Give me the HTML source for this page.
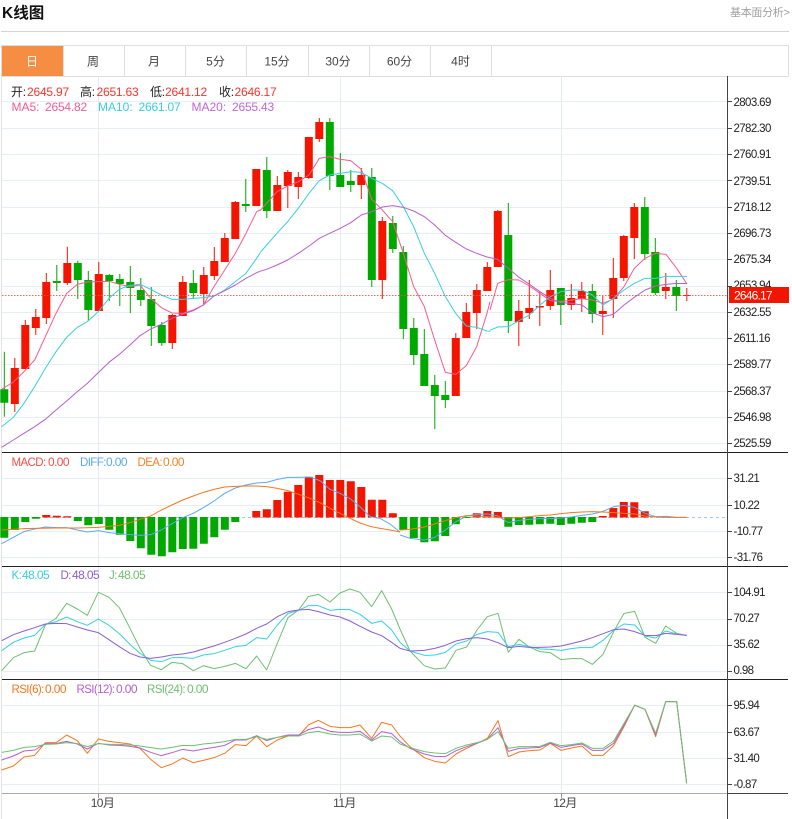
<!DOCTYPE html>
<html><head><meta charset="utf-8"><style>
html,body{margin:0;padding:0;background:#fff;width:792px;height:819px;overflow:hidden}
svg{display:block;font-family:"Liberation Sans","Noto Sans CJK SC",sans-serif}
text{font-size:12px}
polyline{fill:none;stroke-width:1;vector-effect:non-scaling-stroke;stroke-linejoin:round}
.a text{font-size:11.5px;fill:#222;letter-spacing:-.62px}
.t text{font-size:12px;fill:#444;text-anchor:middle}
.x text{font-size:12px;fill:#444;text-anchor:middle;letter-spacing:-.6px}
.l text{font-size:12px;letter-spacing:-.2px}
.l text.m{letter-spacing:0}
.l text.n{font-size:11.5px;letter-spacing:-.6px}
.l text.s{letter-spacing:-.6px}
</style></head><body>
<svg width="792" height="819" viewBox="0 0 792 819" xmlns="http://www.w3.org/2000/svg">
<text x="2" y="18" style="font-size:15.5px;font-weight:700" fill="#111">K线图</text>
<text x="730" y="16" style="font-size:11px;letter-spacing:-.3px" fill="#a0a0a0">基本面分析&gt;</text>
<path d="M1 31.5H789" stroke="#d4d4d4"/>
<!-- tabs -->
<path d="M1 45.5H788.5V76.5H1.5V45.5" fill="none" stroke="#dedede"/>
<path d="M63.5 46V76M124.5 46V76M185.5 46V76M246.5 46V76M308.5 46V76M369.5 46V76M430.5 46V76M491.5 46V76" stroke="#dedede"/>
<rect x="2" y="46" width="61" height="30" fill="#f58d42"/>
<g class="t">
<text x="32" y="65.500" style="fill:#fff">日</text><text x="93" y="65.500">周</text><text x="154" y="65.500">月</text><text x="215.5" y="65.500">5分</text><text x="277" y="65.500">15分</text><text x="338" y="65.500">30分</text><text x="399.5" y="65.500">60分</text><text x="460.5" y="65.500">4时</text>
</g>
<path d="M1.5 76V819" stroke="#e2e2e2"/>
<!-- grid -->
<path d="M2 101.5H727M2 128.5H727M2 154.5H727M2 180.5H727M2 207.5H727M2 233.5H727M2 259.5H727M2 286.5H727M2 312.5H727M2 338.5H727M2 364.5H727M2 391.5H727M2 417.5H727M2 443.5H727M2 478.5H727M2 505.5H727M2 531.5H727M2 557.5H727M2 592.5H727M2 619.5H727M2 645.5H727M2 671.5H727M2 705.5H727M2 732.5H727M2 758.5H727M2 784.5H727" stroke="#e8eff4"/>
<path d="M98.5 76V793M340.5 76V793M561.5 76V793" stroke="#e3ebf2"/>
<!-- candle wicks -->
<path fill="none" stroke="#f41500" stroke-width="1" d="M14.8 358V412M25.3 320V369M35.8 309V335M46.3 273V324M67.3 246.700V285M98.800 262V311M172.300 314V349M182.800 276V316M203.800 267V305M214.300 247V280M224.800 233V262M235.300 201V239M256.300 169V206M277.300 176V211M287.800 170V208M298.300 172V199M308.800 137V179M319.300 118V142M361.300 168V199M382.300 217V299M455.800 333V396M466.300 303V338M476.800 284V329M487.300 262V291M497.800 210V267M518.800 300V346M529.300 280V319M539.800 292V326M550.300 270V310M571.300 284V310M581.800 282V312M602.800 296V335M613.300 258V318M623.800 235V281M634.300 203V259M665.800 273V299M686.800 288V301"/>
<path fill="none" stroke="#00a800" stroke-width="1" d="M4.300 351.700V416.700M56.800 265V291M77.800 260.700V299M88.300 271V321M109.300 274V301M119.800 274V306M130.300 266V313M140.800 278V306M151.300 287V346M161.800 322V346M193.300 270V299M245.800 179V212M266.800 157V218M329.800 118V190M340.300 153V187M350.800 170V192M371.800 168V287M392.800 216V253M403.300 246V339M413.800 318V365M424.300 329V386M434.800 375V429M445.300 381V408M508.300 203V333M560.800 288V325M592.300 284V323M644.800 197V260M655.300 238V295M676.300 280V311"/>
<!-- candle bodies -->
<path fill="none" stroke="#f41500" stroke-width="8" d="M14.8 368V404M25.3 325V369M35.8 317V328M46.3 282V318M67.3 263V283M98.800 274V311M172.300 315V343M182.800 282V316M203.800 275V294M214.300 261V276M224.800 238V262M235.300 202V239M256.300 169V206M277.300 185V211M287.800 172V186M298.300 177V187M308.800 137V178M319.300 122V139M361.300 175V185M382.300 221V280M455.800 338V396M466.300 312V338M476.800 290V313M487.300 267V291M497.800 211V267M518.800 311V322M529.300 308V313M539.800 306V307.500M550.300 290V306M571.300 298V305M581.800 291V299M602.800 311V314M613.300 278V299M623.800 236V278M634.300 207V238M665.800 287V291M686.800 295V296"/>
<path fill="none" stroke="#00a800" stroke-width="8" d="M4.300 389.300V402.700M56.800 281V283M77.800 263V280M88.300 280V310M109.300 275V281M119.800 279V284M130.300 282V288M140.800 290V300M151.300 299V326M161.800 325V343M193.300 283V293M245.800 204V206M266.800 170V211M329.800 122V176M340.300 175V187M350.800 181V185M371.800 177V280M392.800 223V249M403.300 252V329M413.800 328V355M424.300 354V386M434.800 385V396M445.300 395V400M508.300 235V321M560.800 288V305M592.300 291V314M644.800 207V254M655.300 252V293M676.300 287V296"/>
<!-- MA lines -->
<g transform="translate(0 130) scale(.33333)">
<polyline stroke="#f45c8e" points="5,778 40,756 72,725 104,690 136,620 168,550 200,490 232,463 262,456 295,455 327,454 358,463 390,470 420,465 452,505 484,533 516,549 548,550 580,540 610,525 642,470 674,420 706,370 738,310 770,245 780,240"/>
<polyline stroke="#37cfe0" points="5,890 40,862 72,820 104,770 136,715 168,665 200,622 232,592 262,575 295,545 327,505 358,478 390,466 420,463 452,478 484,495 516,508 548,508 580,505 610,503 642,498 674,480 706,455 738,430 770,385 780,370"/>
<polyline stroke="#b65fcf" points="5,952 40,930 72,910 104,890 136,868 168,840 200,813 232,785 262,760 295,728 327,697 358,673 390,645 420,617 452,597 484,583 516,565 548,553 580,542 610,525 642,498 674,482 706,465 738,445 770,428 780,424"/>
</g>
<g transform="translate(260 110) scale(.33333)">
<polyline stroke="#f45c8e" points="0,302 20,280 51,245 83,228 115,215 147,195 178,145 209,140 241,148 272,152 304,178 335,268 367,300 398,335 430,430 461,530 493,590 524,690 556,787 587,793 619,767 650,710 681,610 690,575"/>
<polyline stroke="#37cfe0" points="0,428 20,405 51,370 83,335 115,295 147,250 178,212 209,195 241,190 272,185 304,187 335,205 367,220 398,242 430,290 461,350 493,430 524,490 556,560 587,610 619,648 650,652 681,663 690,664"/>
<polyline stroke="#b65fcf" points="0,484 20,478 51,465 83,450 115,430 147,408 178,385 209,370 241,355 272,338 304,315 335,305 367,291 398,287 430,292 461,303 493,320 524,345 556,376 587,397 619,417 650,430 681,441 690,443"/>
</g>
<g transform="translate(490 190) scale(.33333)">
<polyline stroke="#f45c8e" points="0,360 23,280 55,269 87,270 118,288 150,310 181,332 213,335 244,330 276,326 307,330 339,340 370,327 402,290 433,235 465,205 497,190 528,193 560,235 591,282"/>
<polyline stroke="#37cfe0" points="0,421 23,411 55,410 87,392 118,375 150,345 181,320 213,305 244,300 276,300 307,315 339,345 370,325 402,300 433,280 465,265 497,265 528,259 560,259 591,259"/>
<polyline stroke="#b65fcf" points="0,203 23,208 55,235 87,262 118,283 150,305 181,325 213,338 244,340 276,345 307,368 339,380 370,373 402,345 433,322 465,300 497,288 528,283 560,280 591,281"/>
</g>
<path d="M2 295.500H727" stroke="#f0504a" stroke-dasharray="1.500 1.500" opacity=".85"/>
<!-- MACD -->
<path d="M2 517.500H725" stroke="#9cc7ea" stroke-dasharray="3 3"/>
<path fill="none" stroke="#00a800" stroke-width="8" d="M4.300 517V537.700M14.800 517V530M25.300 517V522M35.800 517V518.700M77.800 517V521M88.300 517V525.300M98.800 517V524M109.300 517V529.700M119.800 517V534.700M130.300 517V541M140.800 517V548.300M151.300 517V554.700M161.800 517V556.300M172.300 517V552.300M182.800 517V549M193.300 517V548.700M203.800 517V543.700M214.300 517V537.300M224.800 517V529.700M235.300 517V522M403.300 517V530M413.800 517V538M424.300 517V542.300M434.800 517V541.300M445.300 517V536M455.800 517V524.300M466.300 517V518M508.300 517V526.700M518.800 517V525M529.300 517V524.700M539.800 517V524.300M550.300 517V523.700M560.800 517V525M571.300 517V523.700M581.800 517V522.700M592.300 517V522"/>
<path fill="none" stroke="#f41500" stroke-width="8" d="M46.300 515V517.500M56.800 515.700V517.500M67.300 516.300V517.500M256.300 511V517.500M266.800 509.300V517.500M277.300 500V517.500M287.800 491.700V517.500M298.300 485V517.500M308.800 476.700V517.500M319.300 475V517.500M329.800 480V517.500M340.300 480V517.500M350.800 481.300V517.500M361.300 487V517.500M371.800 499.700V517.500M382.300 499.700V517.500M392.800 513.300V517.500M476.800 513.300V517.500M487.300 511V517.500M497.800 512V517.500M602.800 516V517.500M613.300 508V517.500M623.800 502V517.500M634.300 502.300V517.500M644.800 511.300V517.500"/>
<g transform="translate(0 450) scale(.33333)">
<polyline stroke="#5aa9f0" points="5,281 40,262 72,245 104,237 136,231 168,233 200,233 232,240 262,246 295,242 327,248 358,251 390,254 420,256 452,254 484,240 516,221 548,203 580,190 610,173 642,153 674,130 706,114 738,105 770,99 800,97 832,88 864,82 896,82 930,81 960,92 990,118 1020,130 1050,146 1080,170 1110,200 1140,205 1170,222 1200,246"/>
<polyline stroke="#f5771f" points="5,240 40,238 72,236 104,235 168,234 232,234 295,232 358,226 390,218 420,208 452,198 484,180 516,165 548,150 580,138 610,127 642,118 674,111 706,109 738,108 770,108 800,110 832,115 864,122 896,133 930,145 960,158 990,175 1020,190 1050,205 1080,219 1110,229 1140,235 1170,240 1200,246"/>
</g>
<g transform="translate(400 450) scale(.33333)">
<polyline stroke="#5aa9f0" points="0,255 30,265 73,270 104,262 136,240 168,215 200,198 231,193 262,192 294,198 325,218 357,211 388,208 420,206 451,206 483,204 514,201 546,196 577,192 609,184 641,170 672,166 704,172 735,190 767,200 800,199 830,202 860,202"/>
<polyline stroke="#f5771f" points="0,240 30,238 73,231 104,222 136,212 168,203 200,197 231,198 262,200 294,203 325,204 357,203 388,200 420,197 451,195 483,191 514,188 546,186 577,185 609,186 641,188 672,190 704,192 735,198 767,201 800,202 860,202"/>
</g>
<!-- KDJ -->
<g transform="translate(0 565) scale(.33333)">
<polyline stroke="#6fc06f" points="5,317 40,278 72,263 104,258 136,180 168,160 200,115 232,132 262,151 295,82 327,97 358,128 390,190 420,250 452,301 484,314 516,292 548,296 580,317 610,302 642,311 674,304 706,295 738,311 770,273 800,315 832,235 864,158 896,135 925,95 955,88 990,111 1020,84 1050,72 1080,82 1115,125 1145,77 1175,132 1200,192"/>
<polyline stroke="#37cfe0" points="5,257 40,232 72,219 104,211 136,178 168,170 200,156 232,170 262,181 295,162 327,181 358,206 390,238 420,265 452,286 484,290 516,278 548,278 580,280 610,270 642,266 674,256 706,245 738,241 770,218 800,222 832,180 864,145 896,136 925,122 955,122 990,136 1020,133 1050,134 1080,148 1115,175 1145,168 1175,195 1200,232"/>
<polyline stroke="#8b5fd0" points="5,227 40,209 72,198 104,188 136,177 168,175 200,176 232,186 262,195 295,203 327,224 358,245 390,265 420,276 452,280 484,276 516,270 548,267 580,261 610,252 642,243 674,232 706,220 738,207 770,190 800,177 832,155 864,140 896,135 925,133 955,140 990,150 1020,156 1050,168 1080,184 1115,201 1145,212 1175,232 1200,250"/>
</g>
<g transform="translate(400 565) scale(.33333)">
<polyline stroke="#6fc06f" points="0,192 30,258 73,302 104,312 136,309 168,256 200,246 231,195 262,155 294,145 325,262 357,223 388,246 420,260 451,263 483,284 514,281 546,281 577,298 609,268 641,200 672,145 704,139 735,217 767,235 797,183 830,205 860,211"/>
<polyline stroke="#37cfe0" points="0,232 30,258 73,271 104,270 136,262 168,237 200,228 231,208 262,200 294,202 325,245 357,238 388,245 420,252 451,253 483,256 514,251 546,247 577,247 609,226 641,196 672,177 704,180 735,213 767,219 797,198 830,207 860,211"/>
<polyline stroke="#8b5fd0" points="0,250 30,258 73,256 104,250 136,241 168,228 200,221 231,218 262,222 294,233 325,248 357,244 388,247 420,247 451,246 483,243 514,236 546,228 577,218 609,206 641,194 672,192 704,200 735,211 767,212 797,205 830,208 860,211"/>
</g>
<!-- RSI -->
<g transform="translate(0 680) scale(.33333)">
<polyline stroke="#f5771f" points="5,270 40,258 72,231 104,226 136,188 168,188 200,165 232,182 262,220 295,177 327,184 358,188 390,192 420,205 452,238 484,263 516,252 548,234 580,248 610,241 642,233 674,220 706,194 738,197 770,168 800,200 832,180 864,168 896,168 925,135 955,121 990,139 1020,143 1050,143 1080,135 1115,175 1145,127 1175,135 1200,168"/>
<polyline stroke="#b65fcf" points="5,240 40,228 72,213 104,210 136,191 168,191 200,184 232,192 262,207 295,190 327,195 358,196 390,199 420,204 452,217 484,227 516,218 548,208 580,213 610,207 642,202 674,196 706,180 738,180 770,167 800,182 832,172 864,165 896,165 925,149 955,141 990,154 1020,157 1050,157 1080,154 1115,180 1145,155 1175,161 1200,185"/>
<polyline stroke="#6fc06f" points="5,217 40,211 72,202 104,200 136,193 168,192 200,188 232,191 262,200 295,191 327,193 358,193 390,195 420,198 452,203 484,207 516,202 548,196 580,197 610,192 642,189 674,185 706,178 738,178 770,170 800,178 832,172 864,168 896,168 925,158 955,154 990,162 1020,165 1050,165 1080,162 1115,183 1145,168 1175,171 1200,192"/>
</g>
<g transform="translate(400 680) scale(.33333)">
<polyline stroke="#f5771f" points="0,168 30,200 73,233 104,244 136,249 168,222 200,205 231,190 262,175 294,122 325,230 357,216 388,212 420,210 451,190 483,211 514,204 546,198 577,226 609,226 641,197 672,140 704,75 735,88 767,170 797,65 830,65 860,310"/>
<polyline stroke="#b65fcf" points="0,185 30,205 73,222 104,229 136,230 168,212 200,200 231,190 262,178 294,143 325,214 357,205 388,204 420,202 451,189 483,202 514,197 546,192 577,211 609,211 641,190 672,135 704,76 735,88 767,165 797,65 830,65 860,310"/>
<polyline stroke="#6fc06f" points="0,192 30,203 73,215 104,219 136,221 168,205 200,195 231,188 262,178 294,155 325,205 357,200 388,200 420,199 451,187 483,197 514,194 546,189 577,205 609,205 641,183 672,130 704,76 735,88 767,160 797,65 830,65 860,310"/>
</g>
<!-- frame lines -->
<path d="M2 452.500H788M2 566.500H788M2 679.500H788" stroke="#222"/>
<path d="M2 793.500H727" stroke="#aaa"/><path d="M727 793.500H788" stroke="#444"/>
<path d="M727.500 76V819" stroke="#444"/>
<path d="M98.500 793V798M340.500 793V798M561.500 793V798" stroke="#999"/>
<!-- axis ticks -->
<path stroke="#444" d="M728 101.500H732M728 128.500H732M728 154.500H732M728 180.500H732M728 207.500H732M728 233.500H732M728 259.500H732M728 286.500H732M728 312.500H732M728 338.500H732M728 364.500H732M728 391.500H732M728 417.500H732M728 443.500H732M728 478.500H732M728 505.500H732M728 531.500H732M728 557.500H732M728 592.500H732M728 619.500H732M728 645.500H732M728 671.500H732M728 705.500H732M728 732.500H732M728 758.500H732M728 784.500H732"/>
<g class="a">
<text x="733.500" y="106">2803.69</text><text x="733.500" y="132">2782.30</text><text x="733.500" y="158">2760.91</text><text x="733.500" y="185">2739.51</text><text x="733.500" y="211">2718.12</text><text x="733.500" y="237">2696.73</text><text x="733.500" y="263">2675.34</text><text x="733.500" y="289">2653.94</text><text x="733.500" y="316">2632.55</text><text x="733.500" y="342">2611.16</text><text x="733.500" y="368">2589.77</text><text x="733.500" y="395">2568.37</text><text x="733.500" y="421">2546.98</text><text x="733.500" y="447">2525.59</text>
<text x="733.500" y="482">31.21</text><text x="733.500" y="509">10.22</text><text x="733.500" y="535">-10.77</text><text x="733.500" y="561">-31.76</text>
<text x="733.500" y="596">104.91</text><text x="733.500" y="622">70.27</text><text x="733.500" y="648">35.62</text><text x="733.500" y="674">0.98</text>
<text x="733.500" y="709">95.94</text><text x="733.500" y="736">63.67</text><text x="733.500" y="762">31.40</text><text x="733.500" y="788">-0.87</text>
</g>
<rect x="729" y="287" width="60" height="16" fill="#f41500"/>
<text x="734" y="299.500" fill="#fff" style="font-size:12px;letter-spacing:-.8px">2646.17</text>
<g class="x"><text x="102.500" y="807">10月</text><text x="344.500" y="807">11月</text><text x="565" y="807">12月</text></g>
<!-- legends -->
<g class="l">
<g fill="#222"><text x="11" y="96">开:</text><text x="80" y="96">高:</text><text x="150" y="96">低:</text><text x="219" y="96">收:</text></g>
<g fill="#f6352c"><text x="27" y="96">2645.97</text><text x="96.500" y="96">2651.63</text><text x="165" y="96">2641.12</text><text x="234.500" y="96">2646.17</text></g>
<g fill="#f45c8e"><text class="m" x="11.500" y="111">MA5:</text><text x="45" y="111">2654.82</text></g>
<g fill="#37cfe0"><text class="m" x="98" y="111">MA10:</text><text x="138.500" y="111">2661.07</text></g>
<g fill="#c065d5"><text class="m" x="191.500" y="111">MA20:</text><text x="232" y="111">2655.43</text></g>
<g fill="#f0504a"><text class="n" x="11.500" y="466">MACD:</text><text class="s" x="48" y="466">0.00</text></g>
<g fill="#5aa9f0"><text class="n" x="80" y="466">DIFF:</text><text class="s" x="106" y="466">0.00</text></g>
<g fill="#f5822a"><text class="n" x="137.500" y="466">DEA:</text><text class="s" x="163" y="466">0.00</text></g>
<g fill="#37cfe0"><text class="n" x="11.500" y="579">K:</text><text class="s" x="22" y="579">48.05</text></g>
<g fill="#8b5fd0"><text class="n" x="60.500" y="579">D:</text><text class="s" x="72" y="579">48.05</text></g>
<g fill="#6fc06f"><text class="n" x="109" y="579">J:</text><text class="s" x="118" y="579">48.05</text></g>
<g fill="#f5771f"><text class="n" x="11.500" y="693">RSI(6):</text><text class="s" x="45" y="693">0.00</text></g>
<g fill="#b65fcf"><text class="n" x="76.500" y="693">RSI(12):</text><text class="s" x="116" y="693">0.00</text></g>
<g fill="#6fc06f"><text class="n" x="147" y="693">RSI(24):</text><text class="s" x="187" y="693">0.00</text></g>
</g>
</svg>
</body></html>
